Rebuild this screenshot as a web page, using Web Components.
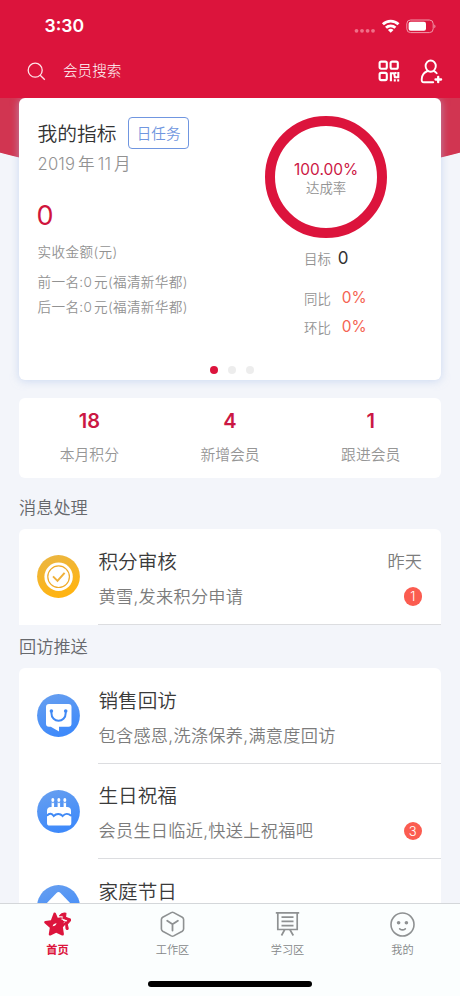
<!DOCTYPE html>
<html lang="zh-CN">
<head>
<meta charset="utf-8">
<title>会员首页</title>
<style>
html,body{margin:0;padding:0}
body{width:460px;height:996px;overflow:hidden;background:#f3f5fa;font-family:Inter,"Noto Sans CJK SC",sans-serif;font-weight:350}
</style>
</head>
<body>
<member-app></member-app>
<script>
const define = (name, html, setup) => customElements.define(name, class extends HTMLElement {
  connectedCallback() {
    if (this.shadowRoot) return;
    const root = this.attachShadow({ mode: 'open' });
    root.innerHTML = '<style>*{box-sizing:border-box}:host{display:block;box-sizing:border-box}</style>' + html;
    if (setup) setup(root, this);
  }
});

define('status-bar', `<style>
:host{height:50px;padding:1px 24px 0 44.5px;display:flex;align-items:center;justify-content:space-between;color:#fff}
b{font-size:17.6px;line-height:20px;font-weight:600}
svg{display:block;width:82px;height:16px}
</style><b>3:30</b>
<svg viewBox="354 17 82 16">
<g fill="#ef7088"><circle cx="356.5" cy="29.8" r="1.9"/><circle cx="362" cy="29.8" r="1.9"/><circle cx="367.6" cy="29.8" r="1.9"/><circle cx="373" cy="29.8" r="1.9"/></g>
<g fill="none" stroke="#fff" stroke-width="2.8"><path d="M382.9 23.3a11.1 11.1 0 0 1 15.6 0"/><path d="M386 26.8a6.7 6.7 0 0 1 9.4 0"/></g>
<path d="M387.9 29a4 4 0 0 1 5.6 0l-2.8 2.8z" fill="#fff"/>
<rect x="406.8" y="19" width="26.4" height="12.6" rx="3.8" fill="none" stroke="#f09aab"/>
<rect x="408.6" y="20.8" width="17.4" height="9" rx="2" fill="#fff"/><path d="M434.3 23.4c1.6.6 1.6 3.2 0 3.8z" fill="#f09aab"/>
</svg>`);

define('search-bar', `<style>
:host{height:48px;display:flex;align-items:center;padding:0 17px 6px 27px;color:#fff}
span{font-size:14.6px;line-height:20px;margin-left:17px;flex:1;font-weight:300}
svg{display:block;flex:none}.qr{margin-right:20px}
</style>
<svg width="19" height="19" viewBox="0 0 19 19" fill="none" stroke="#ffe3e8" stroke-width="1.3"><circle cx="8.2" cy="8.2" r="7"/><path d="M13.2 13.2l4.6 4.6"/></svg>
<span>会员搜索</span>
<svg class="qr" width="22" height="22" viewBox="0 0 22 22" fill="none" stroke="#fff" stroke-width="2.1"><rect x="1.6" y="1.6" width="7.2" height="7.2" rx="1.5"/><rect x="12.6" y="1.6" width="7.2" height="7.2" rx="1.5"/><rect x="1.6" y="12.9" width="7.2" height="7.2" rx="1.5"/><path d="M12.9 21.200v-7.900h3.200l.8 3.900h3.400v-5.200M17 13h1.600M15.800 20.400h2M19.200 20.400h2"/></svg>
<svg width="23" height="25" viewBox="0 0 23 25" fill="none" stroke="#fff" stroke-width="1.9" stroke-linecap="round" stroke-linejoin="round"><ellipse cx="10.7" cy="7.1" rx="5.1" ry="5.6"/><path d="M7.6 12C4 13.3 1.8 16.8 1.7 20.4c-.1 2.1.6 2.8 2.2 2.8h9.3M13.9 12.1c1.3.5 2.2 1.3 2.8 2.1"/><path d="M18.2 17.8v5.4M15.5 20.5h5.6" stroke-width="2.3"/></svg>`);

define('rate-ring', `<style>
:host{width:122px;height:122px;margin:0 0 0 .2px;border:10.3px solid #dc143c;border-radius:50%;display:flex;flex-direction:column;align-items:center;padding-top:34px}
b{font-weight:400;font-size:15.5px;line-height:20px;color:#cc1744}span{font-size:13.4px;line-height:16px;color:#949494}
</style><b><slot></slot></b><span>达成率</span>`);

define('metric-card', `<style>
:host{height:282px;border-radius:6px;background:#fff;box-shadow:0 1px 8px rgba(176,198,235,.6);padding:15px 19px 0 18.5px;display:grid;grid-template-columns:1fr 157px;grid-template-rows:250px 14px;color:#929292;font-size:13.6px;position:relative}
.title{display:flex;align-items:center;height:40px}
h2{margin:0;font-size:19.8px;line-height:28px;color:#333;font-weight:350;padding-top:1px}
.tag{margin-left:11.5px;width:61px;height:32px;border:1.4px solid #7096e0;border-radius:4px;color:#7096e0;font-size:14.6px;line-height:32px;text-align:center}
p{margin:0;line-height:20px;white-space:nowrap}
.date{font-size:16.6px;line-height:22px;letter-spacing:.2px;word-spacing:-2px}
.zero{font-size:27px;line-height:36px;color:#d0143c;margin-top:23px;font-weight:400;margin-left:-1px}
.l1{margin-top:8px;letter-spacing:.4px}.l2{margin-top:9.5px}.l3{margin-top:5.5px}
.l2,.l3{letter-spacing:.35px;word-spacing:-2.5px}
.right{padding-top:2.5px}
.row{display:flex;align-items:center;height:20px;padding-left:39px;font-size:13.4px}
.row b{font-weight:400;font-size:15.4px;color:#f56352;margin-left:11px}
.goal{margin-top:10px}.row.goal b{font-size:17px;color:#333;margin-left:7px}
.dots{grid-column:1/3;display:flex;gap:10px;justify-content:center;align-items:center;padding-left:5px}
i{width:8px;height:8px;border-radius:50%;background:#ededed}i:first-child{background:#dc143c}
</style>
<div><div class="title"><h2>我的指标</h2><div class="tag">日任务</div></div>
<p class="date">2019 年 11 月</p><p class="zero">0</p>
<p class="l1">实收金额(元)</p><p class="l2">前一名:0 元(福清新华都)</p><p class="l3">后一名:0 元(福清新华都)</p></div>
<div class="right"><rate-ring>100.00%</rate-ring>
<div class="row goal">目标<b>0</b></div><div class="row" style="margin-top:20px">同比<b>0%</b></div><div class="row" style="margin-top:9px">环比<b>0%</b></div></div>
<div class="dots"><i></i><i></i><i></i></div>`);

define('stat-item', `<style>
:host{flex:1;text-align:center;padding-top:12px}
b{display:block;font-size:20px;line-height:22px;font-weight:600;color:#cb1743}
span{display:block;font-size:14.8px;line-height:22px;margin-top:12px;color:#969696}
</style><b></b><span><slot></slot></span>`, (r, h) => { r.querySelector('b').textContent = h.getAttribute('value'); });

define('stat-card', `<style>:host{display:flex;height:80px;margin-top:18px;background:#fff;border-radius:6px}</style><slot></slot>`);

define('section-title', `<style>:host{font-size:17.2px;line-height:24px;color:#66686c}</style><slot></slot>`);

const disc = (a, b, body) => `<svg width="43" height="43" viewBox="0 0 43 43"><defs><linearGradient id="g" x1="0" y1="0" x2=".35" y2="1"><stop stop-color="${a}"/><stop offset="1" stop-color="${b}"/></linearGradient></defs><circle cx="21.5" cy="21.5" r="21.4" fill="url(#g)"/>${body}</svg>`;
const icons = {
  check: disc('#e9b646', '#ffb412', '<circle cx="21.6" cy="21.7" r="14.2" fill="#fff"/><circle cx="21.6" cy="21.7" r="10.8" fill="none" stroke="#efaa28" stroke-width="1.2"/><path d="M16 21.4l4.5 4.5 7.1-8" fill="none" stroke="#efb03a" stroke-width="2"/>'),
  bag: disc('#69a0ef', '#3f8afa', '<path d="M12 10h19.5q3 0 3 3v16.7q0 3-3 3H22v4.7l-8.2-4.7H12q-3 0-3-3V13q0-3 3-3z" fill="#fff"/><path d="M14.4 17.3v1.6c0 10.4 14.3 10.4 14.3 0v-1.6" fill="none" stroke="#4089f5" stroke-width="2"/><circle cx="14.4" cy="17" r="1.8" fill="#4089f5"/><circle cx="28.7" cy="17" r="1.8" fill="#4089f5"/>'),
  cake: disc('#69a0ef', '#3f8afa', '<g fill="#fff"><path d="M10 25v-4q0-4 4-4h16q4 0 4 4v4z"/><path d="M10 26.4c2.2-3 5-2.4 6.7.2 2.5-2.6 6.5-2.6 9 0 2.2-2.6 5.4-3 8.6-.2V33q0 2.6-2.6 2.6H12.6Q10 35.600 10 33z"/><path d="M14.600 12h2.500v5h-2.500zm6 0h2.500v5h-2.500zm6 0h2.500v5h-2.500z"/><ellipse cx="15.800" cy="10" rx="1.500" ry="2"/><ellipse cx="21.800" cy="10" rx="1.500" ry="2"/><ellipse cx="27.800" cy="10" rx="1.500" ry="2"/></g><path d="M10 25.800c2.200-3 5-2.400 6.700.2 2.500-2.600 6.500-2.600 9 0 2.200-2.600 5.400-3 8.600-.2" fill="none" stroke="#4089f5" stroke-width="1.900"/><path d="M14.400 12.600h3m3 0h3m3 0h3" stroke="#5a97f2" stroke-width=".9"/>'),
  house: disc('#69a0ef', '#3f8afa', '<path d="M7.500 20.500L19.500 8q2-2 4 0l12 12.500v8h-28z" fill="#fff"/><path d="M16 19.500h4m3 0h4" stroke="#9aa6bd" stroke-width="3"/>')
};

define('task-row', `<style>
:host{display:flex;height:95.5px;padding-left:18px}
.ic{padding-top:26px;width:61px;flex:none}svg{display:block}
.body{flex:1;border-bottom:1px solid #dcdde0;padding:20.500px 19px 0 .5px;display:grid;grid-template-columns:1fr auto;grid-template-rows:24px 24px;row-gap:11px;align-items:center}
h3{margin:0;font-size:19.600px;line-height:24px;font-weight:350;color:#3a3a3a}
p{margin:0;font-size:17.200px;line-height:24px;color:#7c7c7c;white-space:nowrap;letter-spacing:.27px}
time{font-size:17.200px;line-height:24px;color:#7c7c7c}
.badge{justify-self:end;width:18.500px;height:18.500px;border-radius:50%;background:#fb5c50;color:#fff;font-size:13px;line-height:18.500px;text-align:center}
</style><div class="ic"></div><div class="body"><h3></h3><time></time><p></p></div>`, (r, h) => {
  const g = n => h.getAttribute(n) || '';
  r.querySelector('.ic').innerHTML = icons[g('icon')];
  r.querySelector('h3').textContent = g('heading');
  r.querySelector('time').textContent = g('when');
  r.querySelector('p').textContent = g('detail');
  if (g('count')) {
    const b = document.createElement('span');
    b.className = 'badge'; b.textContent = g('count');
    r.querySelector('.body').append(b);
  }
});
define('task-list', `<style>:host{background:#fff;border-radius:6px 6px 0 0}</style><slot></slot>`);

const tabs = {
  star: '<g transform="translate(-2.600 -1) scale(1.120 1.080)"><path d="M11 2.600q1.200-.9 1.900.3l1.700 4.300 3.300-.4 1.500 3.200 2.300.4q1.700.7.6 2l-3.100 3.600.9 6.200q0 1.900-1.700 1.300l-5.200-2.500-5 2.600q-1.800.5-1.600-1.300l.9-5.800-4.600-4.300q-1.200-1.500.6-2l5-.7z" fill="#dc143c"/><path d="M16.200 5.300c1.700-2.300 3.600-3 5.700-2.300l-.4 3.800 4.200 1.500c1 .6.600 1.200-.1 2l-2.500 2.900.8 3.800c-.1 1.300-1.500 1.300-1.900.2l-.3-4.200 2-3.700-4.400-1.500.3-2.500z" fill="#dc143c" stroke="#dc143c" stroke-width="1" stroke-linejoin="round"/><path d="M17.400 8.200l4.200 1.600-1.600 2.400" fill="none" stroke="#fbfefe" stroke-width=".6"/><path d="M10 15c.6-2 1.800-2.300 3.600-2.700-.6 2-1.700 2.700-3.600 2.700z" fill="#fff"/></g>',
  cube: '<g fill="none" stroke="#8e9192" stroke-width="1.600" stroke-linejoin="round" stroke-linecap="round"><path d="M12.300 1.600q1.200-.6 2.400 0l8.600 4.700q1.300.8 1.300 2.200v9.600q0 1.300-1.300 2.100l-8.600 4.700q-1.200.6-2.400 0l-8.600-4.700q-1.300-.8-1.300-2.100V8.500q0-1.400 1.300-2.200z"/><path d="M8.200 9.800l5.300 3.500 5.400-3.500M13.500 13.300v6.200" stroke-width="1.800"/></g>',
  board: '<g fill="none" stroke="#8e9192" stroke-width="1.700"><path d="M1.800 1.800h23.400M3.800 2v16.500h19.400V2M7.500 6.200h12M7.500 10.400h12M7.500 14.600h12M10.800 18.500l-3.300 6M15.800 18.500l3.500 6"/></g>',
  face: '<circle cx="13.500" cy="13.500" r="11.500" fill="none" stroke="#8e9192" stroke-width="1.600"/><circle cx="9.600" cy="11.800" r="1.800" fill="#8e9192"/><circle cx="17.400" cy="11.800" r="1.800" fill="#8e9192"/><path d="M10.700 17.800c1.800 1.400 3.800 1.400 5.600 0" fill="none" stroke="#8e9192" stroke-width="1.700" stroke-linecap="round"/>'
};
define('tab-item', `<style>
:host{flex:1;display:flex;flex-direction:column;align-items:center;padding-top:7px;font-size:11.200px;color:#858889;font-weight:350}
:host([active]){color:#dc143c;font-weight:600}
svg{display:block}span{line-height:16px;margin-top:4px}
</style><svg width="27" height="27" viewBox="0 0 27 27"></svg><span><slot></slot></span>`, (r, h) => { r.querySelector('svg').innerHTML = tabs[h.getAttribute('icon')]; });
define('tab-bar', `<style>
:host{height:93px;border-top:1px solid #d4d7da;background:#fbfefe;display:flex;flex-direction:column;flex:none}
nav{display:flex;height:77px}.home{width:164px;height:5.500px;border-radius:3px;background:#000;margin:0 auto}
</style><nav><slot></slot></nav><div class="home"></div>`);

define('member-app', `<style>
:host{display:flex;flex-direction:column;height:996px;width:460px}
header{background:#dc143c;height:98px;flex:none}
main{flex:1;min-height:0;overflow:hidden;padding:0 19px;background:radial-gradient(circle 900px at 230px -815px,#d13551 99.900%,transparent 100%) no-repeat 0 0/460px 90px}
section-title{margin:18px 0 9px}.second{margin:10px 0 9.500px}
</style>
<header><status-bar></status-bar><search-bar></search-bar></header>
<main><metric-card></metric-card>
<stat-card><stat-item value="18">本月积分</stat-item><stat-item value="4">新增会员</stat-item><stat-item value="1">跟进会员</stat-item></stat-card>
<section-title>消息处理</section-title>
<task-list><task-row icon="check" heading="积分审核" detail="黄雪,发来积分申请" when="昨天" count="1"></task-row></task-list>
<section-title class="second">回访推送</section-title>
<task-list><task-row icon="bag" heading="销售回访" detail="包含感恩,洗涤保养,满意度回访"></task-row><task-row icon="cake" heading="生日祝福" detail="会员生日临近,快送上祝福吧" count="3"></task-row><task-row icon="house" heading="家庭节日"></task-row></task-list></main>
<tab-bar><tab-item icon="star" active>首页</tab-item><tab-item icon="cube">工作区</tab-item><tab-item icon="board">学习区</tab-item><tab-item icon="face">我的</tab-item></tab-bar>`);
</script>
</body>
</html>
